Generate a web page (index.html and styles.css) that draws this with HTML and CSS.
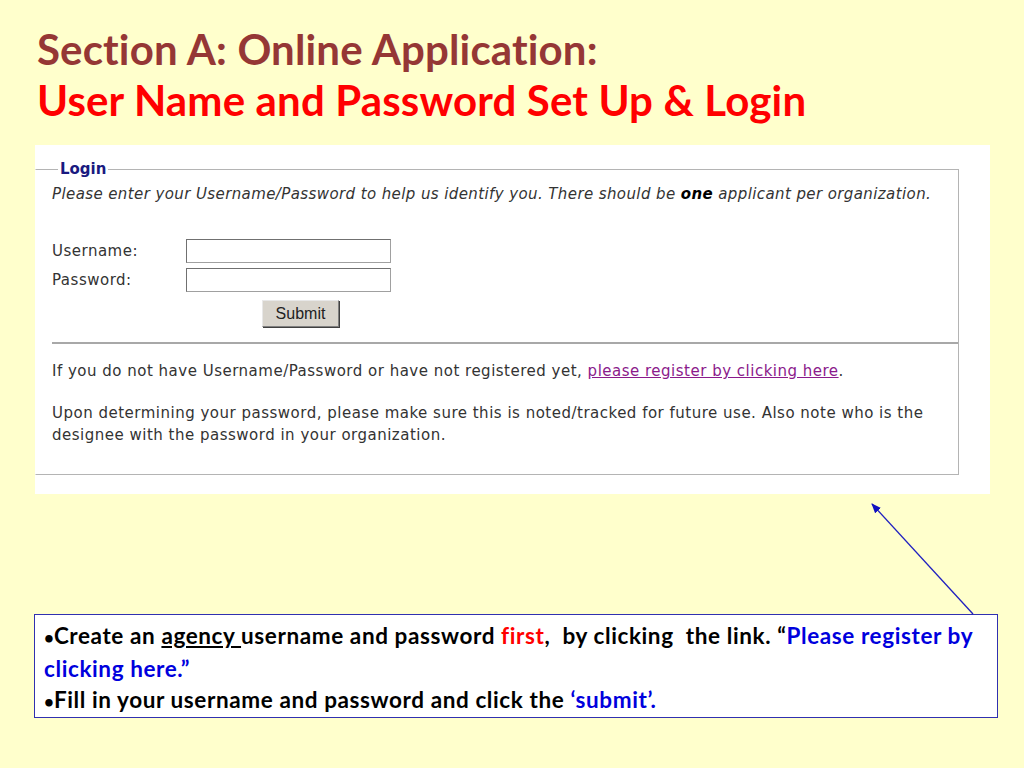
FILE: index.html
```html
<!DOCTYPE html>
<html>
<head>
<meta charset="utf-8">
<link rel="stylesheet" href="styles.css">
</head>
<body>
<div class="slide">
  <h1 class="title">
    <span class="t1">Section A: Online Application:</span>
    <span class="t2">User Name and Password Set Up &amp; Login</span>
  </h1>
  <div class="panel">
    <fieldset class="login">
      <legend>Login</legend>
      <p class="intro">Please enter your Username/Password to help us identify you. There should be <b>one</b> applicant per organization.</p>
      <div class="row first"><span class="lbl">Username:</span><input class="field" type="text"></div>
      <div class="row"><span class="lbl">Password:</span><input class="field" type="password"></div>
      <div class="btnrow"><button class="submit">Submit</button></div>
      <hr class="sep">
      <p class="note">If you do not have Username/Password or have not registered yet, <a class="reg" href="#">please register by clicking here</a>.</p>
      <p class="note">Upon determining your password, please make sure this is noted/tracked for future use. Also note who is the designee with the password in your organization.</p>
    </fieldset>
  </div>
  <div class="callout">
    <p><span class="dot">•</span>Create an <u>agency </u>username and password <span class="red">first</span>,&nbsp; by clicking&nbsp; the link. “<span class="blue">Please register by clicking here.”</span></p>
    <p><span class="dot">•</span>Fill in your username and password and click the <span class="blue">‘submit’.</span></p>
  </div>
</div>
<svg class="arrow" width="1024" height="768" viewBox="0 0 1024 768">
  <defs>
    <marker id="ah" markerWidth="10" markerHeight="8" refX="9" refY="4" orient="auto" markerUnits="userSpaceOnUse">
      <path d="M0,0 L10,4 L0,8 Z" fill="#1010c0"/>
    </marker>
  </defs>
  <line x1="973" y1="614" x2="872" y2="504" stroke="#2020c0" stroke-width="1.3" marker-end="url(#ah)"/>
</svg>
</body>
</html>
```
FILE: styles.css
```css
html, body {
  margin: 0;
  padding: 0;
  background: #ffffcc;
}
.slide {
  width: 1024px;
  height: 768px;
  box-sizing: border-box;
  padding: 24px 0 0 0;
}
.title {
  margin: 0 0 0 37px;
  font-family: Lato, "Open Sans", sans-serif;
  font-weight: 700;
  font-size: 42px;
  line-height: 51px;
  letter-spacing: 0.15px;
}
.t1 { display: block; color: #953735; }
.t2 { display: block; color: #ff0000; }
.panel {
  margin: 19px 0 0 35px;
  width: 955px;
  height: 349px;
  background: #ffffff;
  box-sizing: border-box;
  padding-top: 15px;
}
.login {
  margin: 0;
  width: 920px;
  height: 315px;
  box-sizing: border-box;
  border: 1px solid #b4b4b4;
  border-left-color: #ffffff;
  padding: 0 0 0 16px;
  font-family: "DejaVu Sans", Verdana, sans-serif;
  font-size: 15px;
  letter-spacing: 0.5px;
  color: #333333;
}
.login legend {
  margin-left: 6px;
  padding: 0 2px;
  font-family: "DejaVu Sans", Verdana, sans-serif;
  font-weight: bold;
  font-size: 15px;
  letter-spacing: 0;
  color: #1a1a80;
}
.intro {
  margin: 6px 0 0 0;
  font-style: italic;
  line-height: 20px;
  letter-spacing: 0.4px;
}
.intro b { font-style: italic; color: #000; }
.row {
  display: flex;
  align-items: center;
  height: 29px;
}
.row.first { margin-top: 32px; }
.lbl { width: 134px; }
.field {
  width: 205px;
  height: 24px;
  box-sizing: border-box;
  border: 1px solid #a0a0a0;
  border-top-color: #707070;
  border-left-color: #707070;
  margin: 0;
  padding: 0;
  background: #fff;
}
.btnrow {
  padding-left: 210px;
  margin-top: 6px;
  height: 27px;
}
.submit {
  display: block;
  width: 77px;
  height: 27px;
  background: #d8d4cc;
  border: 1px solid #808080;
  border-top-color: #e8e8e8;
  border-left-color: #e8e8e8;
  box-shadow: 1px 1px 0 #404040;
  font-family: "Liberation Sans", Arial, sans-serif;
  font-size: 16px;
  letter-spacing: 0;
  color: #222;
  padding: 0;
}
.sep {
  margin: 15px 0 0 0;
  width: 906px;
  border: 0;
  border-top: 2px solid #a8a8a8;
  height: 0;
}
.note {
  margin: 16px 0 0 0;
  line-height: 22px;
  width: 890px;
}
.note + .note { margin-top: 20px; }
.reg { color: #8b1a8b; }
.callout {
  position: relative;
  margin: 120px 0 0 34px;
  width: 964px;
  height: 104px;
  box-sizing: border-box;
  border: 1px solid #3030b0;
  background: #ffffff;
  padding: 5px 8px 0 9px;
  font-family: Lato, "Open Sans", sans-serif;
  font-weight: 700;
  font-size: 22.5px;
  line-height: 31px;
  letter-spacing: 0.6px;
  color: #000;
}
.callout p { margin: 0; }
.dot { font-size: 17px; letter-spacing: 0; }
.red { color: #ff0000; }
.blue { color: #0000dd; }
.arrow {
  position: absolute;
  left: 0;
  top: 0;
  pointer-events: none;
}
```
